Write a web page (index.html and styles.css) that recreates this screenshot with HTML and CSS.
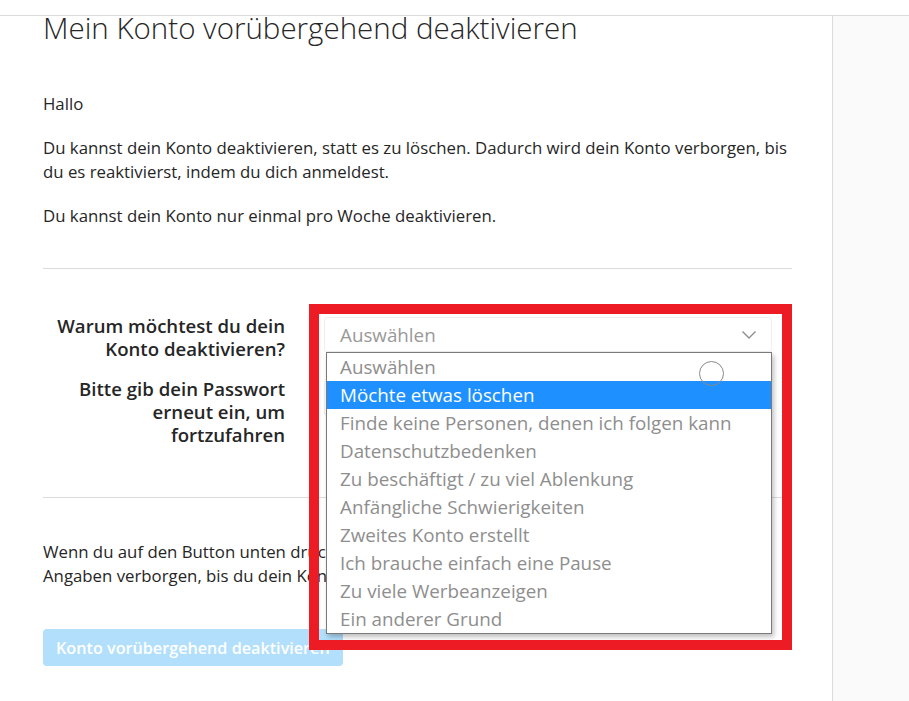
FILE: index.html
```html
<!DOCTYPE html>
<html lang="de">

<head>
    <meta charset="utf-8">
    <title>Mein Konto vorübergehend deaktivieren</title>
    <link rel="stylesheet" href="styles.css">
</head>

<body>
    <div class="topbar"></div>
    <div class="layout">
        <main class="content">
            <h1 class="title">Mein Konto vorübergehend deaktivieren</h1>
            <p class="text text--greeting">Hallo</p>
            <p class="text">Du kannst dein Konto deaktivieren, statt es zu löschen. Dadurch wird dein Konto verborgen, bis du es reaktivierst, indem du dich anmeldest.</p>
            <p class="text">Du kannst dein Konto nur einmal pro Woche deaktivieren.</p>
            <hr class="divider">

            <form class="form">
                <div class="form-row">
                    <label class="form-label" for="reason">Warum möchtest du dein Konto deaktivieren?</label>
                    <div class="form-field">
                        <div class="select" id="reason">
                            <span>Auswählen</span>
                            <svg class="select-arrow" width="16" height="10" viewBox="0 0 16 10">
                                <polyline points="1.5,1.5 8,8 14.5,1.5" fill="none" stroke="#8e8e8e" stroke-width="1.4" />
                            </svg>
                        </div>
                        <ul class="select-list">
                            <li>Auswählen</li>
                            <li class="is-active">Möchte etwas löschen</li>
                            <li>Finde keine Personen, denen ich folgen kann</li>
                            <li>Datenschutzbedenken</li>
                            <li>Zu beschäftigt / zu viel Ablenkung</li>
                            <li>Anfängliche Schwierigkeiten</li>
                            <li>Zweites Konto erstellt</li>
                            <li>Ich brauche einfach eine Pause</li>
                            <li>Zu viele Werbeanzeigen</li>
                            <li>Ein anderer Grund</li>
                        </ul>
                        <div class="cursor-ring"></div>
                        <div class="highlight-box"></div>
                    </div>
                </div>
                <div class="form-row">
                    <label class="form-label" for="password">Bitte gib dein Passwort erneut ein, um fortzufahren</label>
                    <div class="form-field">
                        <input class="input" id="password" type="password">
                    </div>
                </div>
            </form>

            <hr class="divider divider--lower">
            <p class="text text--notice">Wenn du auf den Button unten drückst, werden dein Profil, deine Fotos und „Gefällt mir“-Angaben verborgen, bis du dein Konto durch erneutes Anmelden reaktivierst.</p>
            <button class="btn" type="button" disabled>Konto vorübergehend deaktivieren</button>
        </main>
        <aside class="sidebar"></aside>
    </div>
</body>

</html>
```

FILE: styles.css
```css
body {
    margin: 0;
    font-family: "Open Sans", "Noto Sans", sans-serif;
    color: #262626;
    background: #fff;
}

.topbar {
    height: 15px;
    border-bottom: 1px solid #dbdbdb;
}

.layout {
    display: flex;
    min-height: calc(100vh - 16px);
}

.content {
    box-sizing: border-box;
    width: 833px;
    padding: 0 40px 0 43px;
    border-right: 1px solid #dbdbdb;
}

.sidebar {
    flex: 1;
    background: #fafafa;
}

.title {
    margin: 0 0 52px;
    font-size: 29.5px;
    font-weight: 300;
    line-height: 24px;
    color: #262626;
}

.text {
    margin: 0 0 20px;
    font-size: 16.8px;
    line-height: 24px;
}

.divider {
    margin: 40px 0 0;
    border: 0;
    border-top: 1px solid #dbdbdb;
}

.divider--lower {
    margin-top: 51px;
}

.form {
    display: flex;
    flex-direction: column;
    gap: 17px;
    padding-top: 45px;
}

.form-row {
    display: grid;
    grid-template-columns: 242px 1fr;
    column-gap: 39px;
}

.form-label {
    text-align: right;
    font-size: 18.6px;
    font-weight: 600;
    line-height: 23px;
}

.form-field {
    position: relative;
    margin-right: 20px;
}

.select {
    box-sizing: border-box;
    display: flex;
    align-items: center;
    justify-content: space-between;
    height: 35px;
    margin-top: 3px;
    padding: 0 14px 0 15px;
    border: 1px solid #efefef;
    border-radius: 3px;
    font-size: 18.8px;
    color: #999;
}

.select-list {
    position: absolute;
    top: 38px;
    left: 2px;
    right: 0;
    margin: 0;
    padding: 0;
    list-style: none;
    background: #fff;
    border: 1px solid #7a7a7a;
    box-shadow: 2px 3px 5px rgba(0, 0, 0, 0.25);
    z-index: 2;
}

.select-list li {
    height: 28px;
    padding-left: 13px;
    font-size: 18.8px;
    line-height: 28px;
    color: #8e8e8e;
    white-space: nowrap;
}

.select-list li.is-active {
    background: #1e90ff;
    color: #fff;
}

.cursor-ring {
    position: absolute;
    top: 47px;
    left: 375px;
    width: 23px;
    height: 23px;
    border: 1px solid #8a8a8a;
    border-radius: 50%;
    z-index: 3;
}

.highlight-box {
    position: absolute;
    top: -10px;
    left: -15px;
    width: 483px;
    height: 346px;
    box-sizing: border-box;
    border: 10px solid #ed1c24;
    z-index: 4;
}

.input {
    box-sizing: border-box;
    width: 100%;
    height: 36px;
    margin-top: 3px;
    border: 1px solid #efefef;
    border-radius: 3px;
    background: #fafafa;
}

.text--notice {
    margin: 42px 0 0;
}

.btn {
    margin-top: 41px;
    height: 37px;
    padding: 0 13px;
    border: 0;
    border-radius: 4px;
    background: #b2dffc;
    color: #fff;
    font-family: inherit;
    font-size: 16.2px;
    font-weight: 600;
}
```
